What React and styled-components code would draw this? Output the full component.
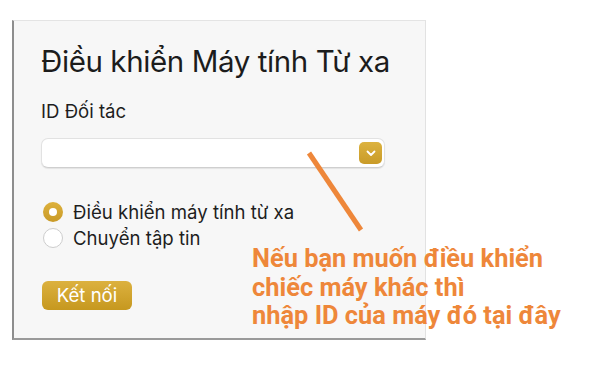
import React from 'react';
import styled, { createGlobalStyle } from 'styled-components';

const GlobalStyle = createGlobalStyle`
  html, body {
    margin: 0;
    padding: 0;
    background: #ffffff;
  }
`;

const Page = styled.div`
  position: relative;
  width: 600px;
  height: 387px;
  padding: 20px 0 0 12px;
  box-sizing: border-box;
  font-family: Inter, "Noto Sans", sans-serif;
  color: #1e1e1e;
`;

const Panel = styled.div`
  width: 414px;
  height: 320px;
  box-sizing: border-box;
  background: #f7f7f7;
  border-top: 1px solid #e4e4e4;
  border-right: 1px solid #e2e2e2;
  border-left: 2px solid #8e8e8e;
  border-bottom: 2px solid #9a9a9a;
  padding: 22px 40px 0 27px;
  display: flex;
  flex-direction: column;
`;

const Title = styled.h1`
  margin: 0;
  font-size: 29.5px;
  font-weight: 400;
  letter-spacing: -0.4px;
  line-height: 36px;
  white-space: nowrap;
  color: #1c1c1c;
`;

const Label = styled.div`
  margin-top: 21px;
  font-size: 18.6px;
  line-height: 22px;
`;

const Combo = styled.div`
  margin-top: 16px;
  height: 30px;
  box-sizing: border-box;
  background: #ffffff;
  border: 1px solid #e2e2e2;
  border-bottom-color: #cfcfcf;
  border-radius: 7px;
  box-shadow: 0 1px 1px rgba(0, 0, 0, 0.08);
  display: flex;
  align-items: center;
  justify-content: flex-end;
  padding-right: 2px;
`;

const ComboButton = styled.div`
  width: 23px;
  height: 22px;
  border-radius: 5px;
  background: linear-gradient(#dcb23f, #c99b28);
  display: flex;
  align-items: center;
  justify-content: center;
`;

const Options = styled.div`
  margin-top: 33px;
  display: flex;
  flex-direction: column;
  gap: 4px;
`;

const Option = styled.div`
  display: flex;
  align-items: center;
  gap: 10px;
  font-size: 18.6px;
  line-height: 22px;
  margin-left: 2px;
`;

const Radio = styled.span`
  width: 20px;
  height: 20px;
  border-radius: 50%;
  box-sizing: border-box;
  display: flex;
  align-items: center;
  justify-content: center;
  background: ${p => (p.checked ? 'linear-gradient(#ddb13d, #c99a27)' : '#ffffff')};
  border: ${p => (p.checked ? 'none' : '1px solid #cdcdcd')};

  &::after {
    content: '';
    display: ${p => (p.checked ? 'block' : 'none')};
    width: 8px;
    height: 8px;
    border-radius: 50%;
    background: #ffffff;
  }
`;

const ConnectButton = styled.button`
  margin-top: 32px;
  align-self: flex-start;
  width: 90px;
  height: 29px;
  border: none;
  border-radius: 6px;
  background: linear-gradient(#dcb13f, #c6981f);
  color: #ffffff;
  font-family: Inter, "Noto Sans", sans-serif;
  font-size: 18.6px;
  padding: 0 0 2px;
  margin-left: 1px;
`;

const Note = styled.div`
  position: absolute;
  left: 252px;
  top: 244px;
  font-family: Roboto, "Noto Sans", sans-serif;
  font-weight: 700;
  font-size: 25.4px;
  line-height: 28.5px;
  color: #ee873a;
  white-space: nowrap;
`;

const Pointer = styled.svg`
  position: absolute;
  left: 300px;
  top: 145px;
`;

function Chevron() {
  return (
    <svg width="10" height="7" viewBox="0 0 10 7">
      <path d="M1.5 1.5 L5 5 L8.5 1.5" fill="none" stroke="#fff" strokeWidth="1.8" strokeLinecap="round" strokeLinejoin="round" />
    </svg>
  );
}

export default function App() {
  return (
    <>
      <GlobalStyle />
      <Page>
        <Panel>
          <Title>Điều khiển Máy tính Từ xa</Title>
          <Label>ID Đối tác</Label>
          <Combo>
            <ComboButton>
              <Chevron />
            </ComboButton>
          </Combo>
          <Options>
            <Option>
              <Radio checked />
              Điều khiển máy tính từ xa
            </Option>
            <Option>
              <Radio />
              Chuyển tập tin
            </Option>
          </Options>
          <ConnectButton>Kết nối</ConnectButton>
        </Panel>
        <Pointer width="70" height="95" viewBox="0 0 70 95">
          <line x1="9" y1="8" x2="61" y2="85" stroke="#ee873a" strokeWidth="5" />
        </Pointer>
        <Note>
          Nếu bạn muốn điều khiển
          <br />
          chiếc máy khác thì
          <br />
          nhập ID của máy đó tại đây
        </Note>
      </Page>
    </>
  );
}
